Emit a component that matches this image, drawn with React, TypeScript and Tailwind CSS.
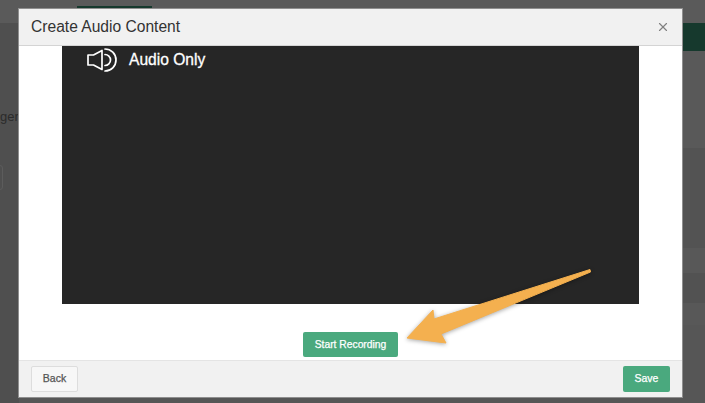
import { X } from "lucide-react"

function SpeakerIcon() {
    return (
        <svg width="31" height="24" viewBox="0 0 31 24" fill="none" stroke="#fff" strokeWidth="1.7" className="block shrink-0">
            <path d="M1 7h5.500L15 2.500v19L6.500 17H1z" strokeLinejoin="round" />
            <path d="M18 6.500a5.500 5.500 0 0 1 0 11" strokeLinecap="round" />
            <path d="M18 1a11 11 0 0 1 0 22" strokeLinecap="round" />
        </svg>
    )
}

function Arrow() {
    return (
        <svg width="200" height="90" viewBox="0 0 200 90" className="absolute left-[405px] top-[265px] drop-shadow-[0_1px_2px_rgba(0,0,0,0.35)]">
            <path d="M185 4.500 L185.500 7 L36 69 L41 78 L2 73 L28 45 L29 54 Z" fill="#f4b04f" stroke="#f4b04f" strokeWidth="1" strokeLinejoin="round" />
        </svg>
    )
}

export default function App() {
    return (
        <div className="relative h-[403px] w-[705px] overflow-hidden bg-[#565656] font-['Liberation_Sans',sans-serif]">
            {/* page behind the overlay */}
            <div className="absolute inset-y-0 left-0 w-[19px] bg-[#4f4f4f]" />
            <div className="absolute inset-x-0 top-0 h-[23px] bg-[#5a5a5a]" />
            <div className="absolute left-[77px] top-[6px] h-[3px] w-[75px] bg-[#16392d]" />
            <div className="absolute right-0 top-[23px] h-[28px] w-[22px] bg-[#16392d]" />
            <div className="absolute right-0 top-[51px] flex w-[22px] flex-col">
                <div className="h-[97px] bg-[#595959]" />
                <div className="h-[100px] bg-[#535353]" />
                <div className="h-[25px] bg-[#585858]" />
                <div className="h-[30px] bg-[#525252]" />
                <div className="h-[22px] bg-[#585858]" />
            </div>
            <div className="absolute left-0 top-[108px] text-[13px] leading-[18px] text-[#2b2b2b]">ger</div>
            <div className="absolute -left-[6px] top-[165px] h-[25px] w-[9px] rounded-[3px] border border-[#5c5c5c]" />

            <div className="absolute left-[19px] top-[9px] flex h-[388px] w-[663px] flex-col bg-white shadow-[0_0_0_1px_#8f8f8f]">
                <div className="flex h-[37px] shrink-0 items-center justify-between border-b border-[#d4d4d4] bg-[#f1f1f1] pl-[12px] pr-[12px]">
                    <h2 className="text-[15.6px] leading-none text-[#333]">Create Audio Content</h2>
                    <X size={14} strokeWidth={2} className="text-[#808080]" />
                </div>
                <div className="flex flex-1 flex-col items-center">
                    <div className="h-[258px] w-[577px] bg-[#262626] pl-[25px] pt-[2px]">
                        <div className="flex items-center gap-[11px]">
                            <SpeakerIcon />
                            <span className="text-[15.6px] text-white [-webkit-text-stroke:0.3px_white]">Audio Only</span>
                        </div>
                    </div>
                    <button className="mt-[28px] h-[25px] w-[95px] rounded-[2px] bg-[#4aa97e] text-[10.3px] text-white [-webkit-text-stroke:0.25px_white]">Start Recording</button>
                </div>
                <div className="flex h-[37px] shrink-0 items-center justify-between border-t border-[#e4e4e4] bg-[#f1f1f1] px-[12px]">
                    <button className="h-[26px] w-[47px] rounded-[2px] border border-[#ddd] bg-[#f7f7f7] text-[10.5px] text-[#555] [-webkit-text-stroke:0.25px_#555]">Back</button>
                    <button className="h-[26px] w-[47px] rounded-[2px] bg-[#4aa97e] text-[10.5px] text-white [-webkit-text-stroke:0.25px_white]">Save</button>
                </div>
            </div>
            <Arrow />
        </div>
    )
}
